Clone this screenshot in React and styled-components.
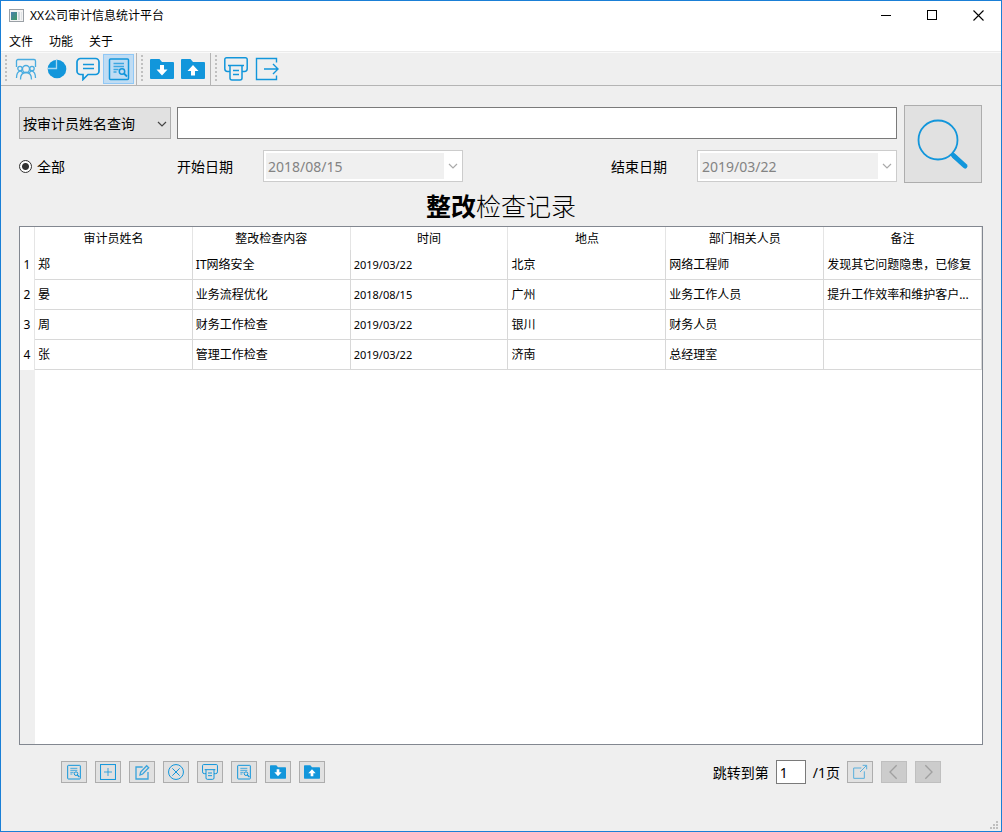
import { useState } from "react";
import styled, { createGlobalStyle } from "styled-components";

const GlobalStyle = createGlobalStyle`
  *,
  *::before,
  *::after {
    box-sizing: border-box;
  }

  body {
    margin: 0;
    font-family: "Noto Sans", "Noto Sans CJK SC", sans-serif;
    font-size: 12px;
    color: #000;
  }

  button,
  input,
  select {
    font-family: inherit;
    color: inherit;
    margin: 0;
    padding: 0;
    border-radius: 0;
  }

  svg {
    display: block;
    flex-shrink: 0;
  }
`;

const Window = styled.div`
  min-height: 100vh;
  display: flex;
  flex-direction: column;
  background-color: #efefef;
  border: 1px solid #1a7fd6;
`;

const TitleBar = styled.header`
  height: 29px;
  display: flex;
  align-items: center;
  gap: 6px;
  padding-left: 8px;
  background-color: #fff;
`;

const WindowTitle = styled.h1`
  flex: 1;
  margin: 0;
  font-size: 12px;
  font-weight: 400;
  line-height: 16px;
`;

const WindowControls = styled.div`
  display: flex;
`;

const WindowButton = styled.button`
  width: 46px;
  height: 29px;
  display: flex;
  align-items: center;
  justify-content: center;
  border: none;
  background: none;
`;

const MenuBar = styled.nav`
  height: 22px;
  display: flex;
  background-color: #fff;
  border-bottom: 1px solid #ebebeb;
`;

const MenuItem = styled.button`
  width: 40px;
  padding-top: 2px;
  border: none;
  background: none;
  font-size: 12px;
  line-height: 16px;
`;

const ToolBars = styled.div`
  height: 34px;
  display: flex;
  border-top: 1px solid #fafafa;
  border-bottom: 1px solid #b4b4b4;
`;

const ToolBar = styled.div`
  display: flex;
  align-items: center;
  padding: 0 2px 1px 4px;
  border-right: ${(props) => (props.$last ? "none" : "1px solid #b4b4b4")};
`;

const Grip = styled.span`
  width: 2px;
  height: 28px;
  margin-right: 3px;
  background-image: linear-gradient(#c0c0c0 50%, transparent 50%);
  background-size: 2px 4px;
`;

const ToolButton = styled.button`
  width: 31px;
  height: 30px;
  display: flex;
  align-items: center;
  justify-content: center;
  color: #1296db;
  background-color: ${(props) => (props.$active ? "#c0dcf3" : "transparent")};
  border: 1px solid ${(props) => (props.$active ? "#90c8f6" : "transparent")};
`;

const Content = styled.main`
  flex: 1;
  display: flex;
  flex-direction: column;
  padding: 19px 18px 0;
`;

const Filters = styled.section`
  display: flex;
  gap: 7px;
  padding-right: 1px;
`;

const FilterRows = styled.div`
  flex: 1;
  display: flex;
  flex-direction: column;
  gap: 11px;
  padding-top: 2px;
`;

const FilterRow = styled.div`
  height: 32px;
  display: flex;
  align-items: center;
  gap: 6px;
`;

const SelectBox = styled.div`
  position: relative;
  width: 152px;
  height: 32px;

  svg {
    position: absolute;
    right: 4px;
    top: 12px;
    pointer-events: none;
  }
`;

const Select = styled.select`
  appearance: none;
  width: 100%;
  height: 100%;
  padding-left: 3px;
  font-size: 14px;
  background-color: #e1e1e1;
  border: 1px solid #adadad;
`;

const SearchInput = styled.input`
  flex: 1;
  min-width: 0;
  height: 32px;
  padding: 0 4px;
  font-size: 14px;
  background-color: #fff;
  border: 1px solid #7a7a7a;
`;

const RadioLabel = styled.label`
  width: 152px;
  display: flex;
  align-items: center;
  gap: 5px;
  font-size: 14px;
`;

const Radio = styled.input`
  appearance: none;
  width: 13px;
  height: 13px;
  border: 1px solid #333;
  border-radius: 50%;
  background: #fff;

  &:checked {
    background: radial-gradient(circle, #333 3px, #fff 4px);
  }
`;

const DateField = styled.div`
  display: flex;
  align-items: center;
  gap: 30px;
  margin-left: ${(props) => (props.$end ? "auto" : "0")};
  font-size: 14px;
`;

const DateBox = styled.div`
  width: 200px;
  height: 32px;
  display: flex;
  padding: 2px 0 2px 2px;
  background-color: #fff;
  border: 1px solid #ccc;
`;

const DateInput = styled.input`
  flex: 1;
  min-width: 0;
  padding: 0 2px;
  border: none;
  background-color: #f0f0f0;
  font-size: 14px;
  color: #838383;
`;

const DateArrow = styled.button`
  width: 18px;
  display: flex;
  align-items: center;
  justify-content: center;
  border: none;
  background: none;
`;

const SearchButton = styled.button`
  width: 78px;
  height: 78px;
  display: flex;
  align-items: center;
  justify-content: center;
  background-color: #e1e1e1;
  border: 1px solid #adadad;
`;

const RecordTitle = styled.h2`
  margin: 0;
  padding-top: 3px;
  text-align: center;
  font-size: 25px;
  font-weight: 300;
  line-height: 40px;

  strong {
    font-weight: 700;
  }
`;

const TableFrame = styled.section`
  flex: 1;
  display: flex;
  flex-direction: column;
  background-color: #fff;
  border: 1px solid #828790;
`;

const EmptyRows = styled.div`
  flex: 1;
  border-left: 15px solid #efefef;
`;

const Table = styled.table`
  width: 100%;
  table-layout: fixed;
  border-collapse: separate;
  border-spacing: 0;
`;

const HeadCell = styled.th`
  width: ${(props) => (props.$corner ? "15px" : "auto")};
  height: 23px;
  padding: 0;
  font-weight: 400;
  line-height: 16px;
  border-right: 1px solid #e5e5e5;
`;

const RowNumber = styled.th`
  height: 30px;
  padding: 0;
  font-weight: 400;
  line-height: 16px;
  border-right: 1px solid #e5e5e5;
`;

const Cell = styled.td`
  height: 30px;
  padding: 0 0 0 3px;
  font-size: ${(props) => (props.$date ? "11px" : "12px")};
  line-height: 16px;
  white-space: nowrap;
  overflow: hidden;
  border-right: 1px solid #d8d8d8;
  border-bottom: 1px solid #d8d8d8;
`;

const Footer = styled.footer`
  display: flex;
  align-items: center;
  justify-content: space-between;
  padding: 15px 42px 0;
`;

const Actions = styled.div`
  display: flex;
  gap: 8px;
`;

const Pager = styled.div`
  display: flex;
  align-items: center;
  gap: 7px;
  font-size: 14px;
`;

const SmallButton = styled.button`
  width: 26px;
  height: 22px;
  display: flex;
  align-items: center;
  justify-content: center;
  color: ${(props) => (props.disabled ? "#a0a0a0" : "#1296db")};
  background-color: ${(props) => (props.disabled ? "#ccc" : "#e1e1e1")};
  border: 1px solid ${(props) => (props.disabled ? "#bfbfbf" : "#adadad")};
`;

const PageInput = styled.input`
  width: 30px;
  height: 24px;
  padding-left: 3px;
  font-size: 14px;
  background-color: #fff;
  border: 1px solid #7a7a7a;
`;

const StatusBar = styled.div`
  height: 47px;
  display: flex;
  align-items: flex-end;
  justify-content: flex-end;
  padding: 0 3px 2px 0;
`;

function Icon({ size = 24, children, stroke = 1.2 }) {
  return (
    <svg
      width={size}
      height={size}
      viewBox="0 0 24 24"
      fill="none"
      stroke="currentColor"
      strokeWidth={stroke}
      aria-hidden="true"
    >
      {children}
    </svg>
  );
}

function MeetingIcon() {
  return (
    <Icon stroke={1.3}>
      <g opacity="0.75">
        <path d="M2.5 10V4A1.5 1.5 0 0 1 4 2.5h16A1.5 1.5 0 0 1 21.5 4v6" />
        <circle cx="12" cy="12" r="3.5" />
        <circle cx="6" cy="11.5" r="2.2" />
        <circle cx="18" cy="11.5" r="2.2" />
        <path d="M6.5 22.5c0-4.5 2.2-7 5.5-7s5.5 2.5 5.5 7" />
        <path d="M2.5 21c0-3.5 1.2-6.5 3.8-7.2l3 2.2M21.5 21c0-3.5-1.2-6.5-3.8-7.2l-3 2.2" />
      </g>
    </Icon>
  );
}

function PieIcon() {
  return (
    <Icon>
      <circle cx="12" cy="12" r="9.3" fill="currentColor" stroke="none" />
      <path d="M11.5 2.5v9h-9" stroke="#a9d8f1" strokeWidth="1.3" />
    </Icon>
  );
}

function ChatIcon() {
  return (
    <Icon stroke={1.7}>
      <path d="M4.5 1.5h15A3.5 3.5 0 0 1 23 5v9a3.5 3.5 0 0 1-3.5 3.5H12l-5 5v-5H4.5A3.5 3.5 0 0 1 1 14V5a3.5 3.5 0 0 1 3.5-3.5z" />
      <path d="M7 7.500h11M7 11.500h11" />
    </Icon>
  );
}

function ReportIcon({ size }) {
  return (
    <Icon size={size} stroke={1.5}>
      <rect x="2.5" y="2" width="19" height="20.5" rx="1" />
      <path d="M6.5 6.5H17M6.5 9.5H17M6.5 12.5h5M6.5 15h3" opacity="0.75" />
      <circle cx="15" cy="14.5" r="2.7" />
      <path d="M17 16.5l3 3" strokeWidth="1.8" />
    </Icon>
  );
}

function FolderIcon({ size, up }) {
  return (
    <Icon size={size}>
      <path
        d="M0 3a1 1 0 0 1 1-1h8.5L12 5h11a1 1 0 0 1 1 1v15a1 1 0 0 1-1 1H1a1 1 0 0 1-1-1z"
        fill="currentColor"
        stroke="none"
      />
      <path
        d={
          up
            ? "M12 8l5.5 6H14v4.5h-4V14H6.5z"
            : "M12 18.5l5.5-6H14V8h-4v4.5H6.5z"
        }
        fill="#fff"
        stroke="none"
      />
    </Icon>
  );
}

function PrinterIcon({ size }) {
  return (
    <Icon size={size} stroke={1.5}>
      <path d="M6 14.5H3.5A2.7 2.7 0 0 1 .8 11.800V2.500A1.700 1.700 0 0 1 2.500.8h19a1.700 1.700 0 0 1 1.700 1.700v9.300a2.700 2.700 0 0 1-2.700 2.700H18" />
      <path d="M4 8.5h16" />
      <path d="M6 8.5V21a2 2 0 0 0 2 2h8a2 2 0 0 0 2-2V8.5" />
      <path d="M9 13.5h6M9 17.5h6" />
    </Icon>
  );
}

function ExitIcon() {
  return (
    <Icon stroke={1.4}>
      <path d="M21.5 5.5v-4h-20v21h20v-4" />
      <path d="M9 12h14M18 7l5 5-5 5" />
    </Icon>
  );
}

function ChevronDown({ color }) {
  return (
    <svg width="10" height="10" viewBox="0 0 10 10" fill="none" aria-hidden="true">
      <path d="M1 3l4 4 4-4" stroke={color} strokeWidth="1.2" />
    </svg>
  );
}

function AppIcon() {
  return (
    <svg width="15" height="13" viewBox="0 0 15 13" aria-hidden="true">
      <defs>
        <linearGradient id="pane" x1="0" y1="0" x2="1" y2="1">
          <stop offset="0" stopColor="#4a7fb0" />
          <stop offset="1" stopColor="#3f9a62" />
        </linearGradient>
      </defs>
      <rect x="0.5" y="0.5" width="14" height="12" fill="#f4f4f4" stroke="#9aa0a6" />
      <rect x="2" y="3" width="6" height="8" fill="url(#pane)" />
      <rect x="9" y="3" width="2" height="8" fill="#cfd8dc" />
      <rect x="12" y="3" width="1" height="8" fill="#dfe3e6" />
    </svg>
  );
}

const columns = [
  "审计员姓名",
  "整改检查内容",
  "时间",
  "地点",
  "部门相关人员",
  "备注",
];

const records = [
  ["郑", "IT网络安全", "2019/03/22", "北京", "网络工程师", "发现其它问题隐患，已修复"],
  ["晏", "业务流程优化", "2018/08/15", "广州", "业务工作人员", "提升工作效率和维护客户..."],
  ["周", "财务工作检查", "2019/03/22", "银川", "财务人员", ""],
  ["张", "管理工作检查", "2019/03/22", "济南", "总经理室", ""],
];

function Title() {
  return (
    <TitleBar>
      <AppIcon />
      <WindowTitle>XX公司审计信息统计平台</WindowTitle>
      <WindowControls>
        <WindowButton aria-label="最小化">
          <svg width="11" height="11" viewBox="0 0 11 11">
            <path d="M0 5.5h10" stroke="#000" />
          </svg>
        </WindowButton>
        <WindowButton aria-label="最大化">
          <svg width="11" height="11" viewBox="0 0 11 11">
            <rect x="0.5" y="0.5" width="9" height="9" fill="none" stroke="#000" />
          </svg>
        </WindowButton>
        <WindowButton aria-label="关闭">
          <svg width="11" height="11" viewBox="0 0 11 11">
            <path d="M0.5 0.5l10 10M10.5 0.5l-10 10" stroke="#000" strokeWidth="1.1" />
          </svg>
        </WindowButton>
      </WindowControls>
    </TitleBar>
  );
}

function Tools() {
  return (
    <ToolBars>
      <ToolBar>
        <Grip />
        <ToolButton aria-label="人员">
          <MeetingIcon />
        </ToolButton>
        <ToolButton aria-label="统计">
          <PieIcon />
        </ToolButton>
        <ToolButton aria-label="消息">
          <ChatIcon />
        </ToolButton>
        <ToolButton $active aria-label="检查记录">
          <ReportIcon size={24} />
        </ToolButton>
      </ToolBar>
      <ToolBar>
        <Grip />
        <ToolButton aria-label="导入">
          <FolderIcon size={24} />
        </ToolButton>
        <ToolButton aria-label="导出">
          <FolderIcon size={24} up />
        </ToolButton>
      </ToolBar>
      <ToolBar $last>
        <Grip />
        <ToolButton aria-label="打印">
          <PrinterIcon size={24} />
        </ToolButton>
        <ToolButton aria-label="退出">
          <ExitIcon />
        </ToolButton>
      </ToolBar>
    </ToolBars>
  );
}

function FilterPanel() {
  const [keyword, setKeyword] = useState("");

  return (
    <Filters>
      <FilterRows>
        <FilterRow>
          <SelectBox>
            <Select aria-label="查询方式">
              <option>按审计员姓名查询</option>
            </Select>
            <ChevronDown color="#444" />
          </SelectBox>
          <SearchInput
            type="text"
            aria-label="查询内容"
            value={keyword}
            onChange={(e) => setKeyword(e.target.value)}
          />
        </FilterRow>
        <FilterRow>
          <RadioLabel>
            <Radio type="radio" name="range" defaultChecked />
            全部
          </RadioLabel>
          <DateField>
            <label htmlFor="start">开始日期</label>
            <DateBox>
              <DateInput id="start" type="text" value="2018/08/15" disabled />
              <DateArrow disabled aria-label="选择开始日期">
                <ChevronDown color="#aaa" />
              </DateArrow>
            </DateBox>
          </DateField>
          <DateField $end>
            <label htmlFor="end">结束日期</label>
            <DateBox>
              <DateInput id="end" type="text" value="2019/03/22" disabled />
              <DateArrow disabled aria-label="选择结束日期">
                <ChevronDown color="#aaa" />
              </DateArrow>
            </DateBox>
          </DateField>
        </FilterRow>
      </FilterRows>
      <SearchButton aria-label="查询">
        <svg width="52" height="52" viewBox="0 0 52 52" fill="none" stroke="#1296db">
          <circle cx="21" cy="22" r="19.5" strokeWidth="1.8" />
          <path d="M35 36l4 4" strokeWidth="4" />
          <path d="M37 38l11 10" strokeWidth="5" strokeLinecap="round" />
        </svg>
      </SearchButton>
    </Filters>
  );
}

function RecordTable() {
  return (
    <TableFrame>
      <Table>
        <thead>
          <tr>
            <HeadCell $corner />
            {columns.map((name) => (
              <HeadCell key={name} scope="col">
                {name}
              </HeadCell>
            ))}
          </tr>
        </thead>
        <tbody>
          {records.map((record, row) => (
            <tr key={row}>
              <RowNumber scope="row">{row + 1}</RowNumber>
              {record.map((value, i) => (
                <Cell key={columns[i]} $date={i === 2}>
                  {value}
                </Cell>
              ))}
            </tr>
          ))}
        </tbody>
      </Table>
      <EmptyRows />
    </TableFrame>
  );
}

function BottomBar() {
  const [page, setPage] = useState("1");

  return (
    <Footer>
      <Actions>
        <SmallButton aria-label="查看">
          <ReportIcon size={16} />
        </SmallButton>
        <SmallButton aria-label="新增">
          <Icon size={16} stroke={1.5}>
            <rect x="0.8" y="0.8" width="22.4" height="22.4" />
            <path d="M12 6v12M6 12h12" opacity="0.8" />
          </Icon>
        </SmallButton>
        <SmallButton aria-label="编辑">
          <Icon size={16} stroke={2}>
            <g opacity="0.8">
              <path d="M13 4.5H3v18h18V12" />
              <path d="M9 16.5l1-4.5L19 2.5l3 3-9 9.5z" />
            </g>
          </Icon>
        </SmallButton>
        <SmallButton aria-label="删除">
          <Icon size={16} stroke={1.5}>
            <circle cx="12" cy="12" r="11.2" />
            <path d="M6.5 6.5l11 11M17.5 6.5l-11 11" />
          </Icon>
        </SmallButton>
        <SmallButton aria-label="打印">
          <PrinterIcon size={16} />
        </SmallButton>
        <SmallButton aria-label="预览">
          <ReportIcon size={16} />
        </SmallButton>
        <SmallButton aria-label="导入">
          <FolderIcon size={16} />
        </SmallButton>
        <SmallButton aria-label="导出">
          <FolderIcon size={16} up />
        </SmallButton>
      </Actions>
      <Pager>
        <label htmlFor="page">跳转到第</label>
        <PageInput
          id="page"
          type="text"
          value={page}
          onChange={(e) => setPage(e.target.value)}
        />
        <span>/1页</span>
        <Actions>
          <SmallButton aria-label="跳转">
            <Icon size={16} stroke={1.5}>
              <g opacity="0.65">
                <path d="M14 6H2.5v15.5h16V11" />
                <path d="M12 12L22 2M16 2h6v6" />
              </g>
            </Icon>
          </SmallButton>
          <SmallButton disabled aria-label="上一页">
            <Icon size={16} stroke={2}>
              <path d="M16 2L6 12l10 10" />
            </Icon>
          </SmallButton>
          <SmallButton disabled aria-label="下一页">
            <Icon size={16} stroke={2}>
              <path d="M8 2l10 10L8 22" />
            </Icon>
          </SmallButton>
        </Actions>
      </Pager>
    </Footer>
  );
}

function App() {
  return (
    <>
      <GlobalStyle />
      <Window>
        <Title />
        <MenuBar>
          <MenuItem>文件</MenuItem>
          <MenuItem>功能</MenuItem>
          <MenuItem>关于</MenuItem>
        </MenuBar>
        <Tools />
        <Content>
          <FilterPanel />
          <RecordTitle>
            <strong>整改</strong>检查记录
          </RecordTitle>
          <RecordTable />
          <BottomBar />
        </Content>
        <StatusBar>
          <svg width="8" height="8" viewBox="0 0 8 8" fill="#bfbfbf" aria-hidden="true">
            <path d="M6 0h2v2H6zM3 3h2v2H3zM6 3h2v2H6zM0 6h2v2H0zM3 6h2v2H3zM6 6h2v2H6z" />
          </svg>
        </StatusBar>
      </Window>
    </>
  );
}

export default App;
